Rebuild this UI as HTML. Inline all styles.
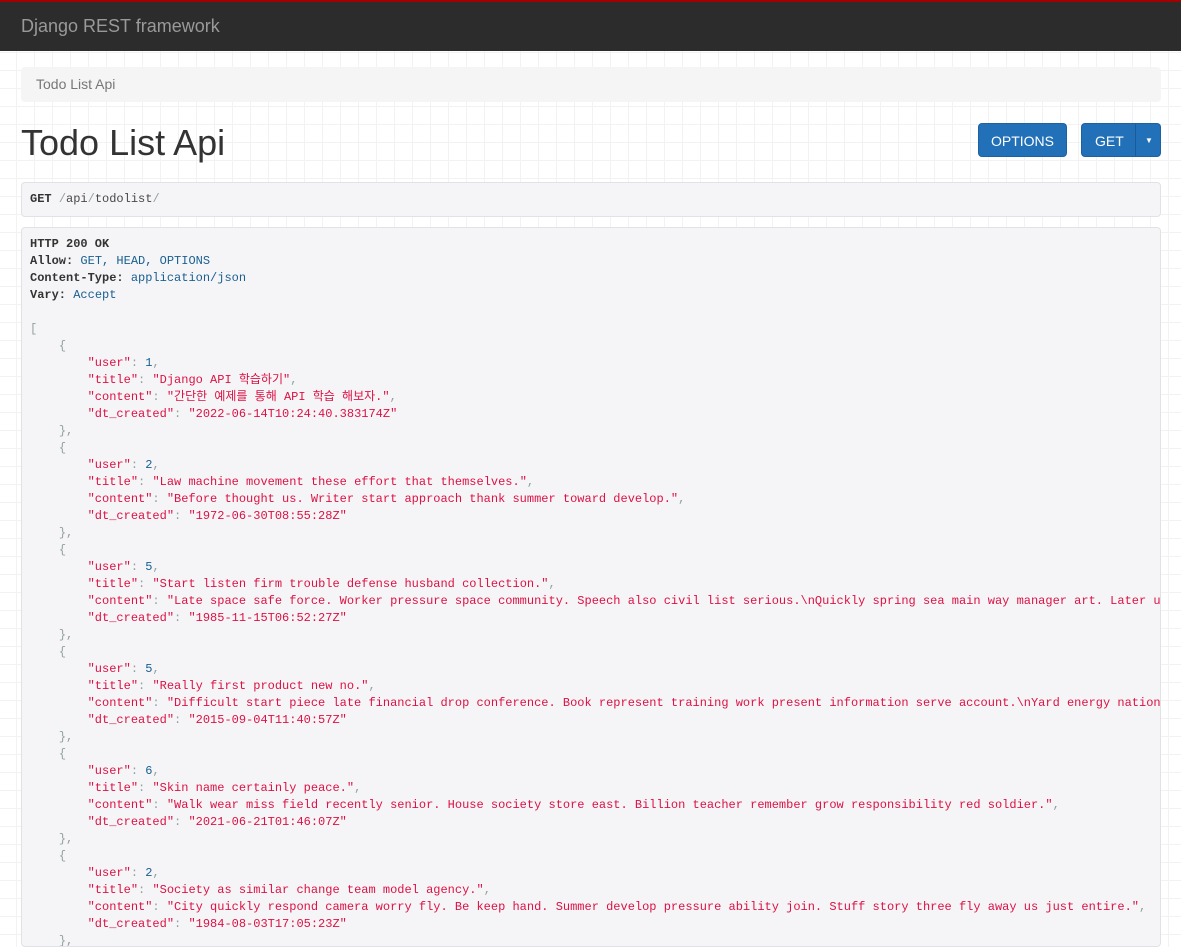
<!DOCTYPE html>
<html><head><meta charset="utf-8"><style>
body{margin:0;font-family:"Liberation Sans",sans-serif;background-color:#fff;
background-image:linear-gradient(#f2f2f2 1px,transparent 1px),linear-gradient(90deg,#f2f2f2 1px,transparent 1px);background-size:18px 18px;background-position:-2px -2px;width:1181px;height:932px;overflow:hidden}
.nav{height:49px;background:#2c2c2c;border-top:2px solid #a30000;}
.nav span{display:block;color:#999;font-size:18px;line-height:49px;padding-left:21px}
.wrap{position:absolute;left:21px;top:67px;width:1140px}
.bc{height:35px;background:#f5f5f5;border-radius:4px;font-size:14px;color:#777;line-height:35px;padding-left:15px}
h1{margin:0;position:absolute;top:54px;left:0;font-size:36px;font-weight:400;color:#333;line-height:44px}
.btn{position:absolute;top:56px;height:34px;background:#2170b8;color:#fff;border-radius:4px;font-size:14px;line-height:34px;text-align:center;border:1px solid #1c62a3;box-sizing:border-box}
pre{margin:0;font-family:"Liberation Mono","Noto Sans CJK KR",monospace;font-size:12px;line-height:17px;background:#f5f5f7;border:1px solid #e1e1e8;border-radius:4px;padding:0 8px;overflow:hidden;white-space:pre;color:#48484c;position:absolute;left:0;width:1140px;box-sizing:border-box}
.s{color:#dd1144}.n{color:#195f91}.p{color:#93a1a1}b{color:#333}
</style></head><body>
<div class="nav"><span>Django REST framework</span></div>
<div class="wrap">
<div class="bc">Todo List Api</div>
<h1>Todo List Api</h1>
<div class="btn" style="left:957px;width:89px">OPTIONS</div>
<div class="btn" style="left:1060px;width:80px;text-align:left;padding-left:13px">GET<span style="position:absolute;left:53px;top:0;bottom:0;border-left:1px solid #1a5a96;width:26px;text-align:center;font-size:8px">&#9660;</span></div>
<pre style="top:115px;height:35px;line-height:33px;font-size:12px"><b>GET</b> <span class="p">/</span>api<span class="p">/</span>todolist<span class="p">/</span></pre>
<pre style="top:160px;height:720px;padding-top:8px"><b>HTTP 200 OK</b>
<b>Allow:</b> <span class="n">GET, HEAD, OPTIONS</span>
<b>Content-Type:</b> <span class="n">application/json</span>
<b>Vary:</b> <span class="n">Accept</span>

<span class="p">[</span>
    <span class="p">{</span>
        <span class="s">"user"</span><span class="p">: </span><span class="n">1</span><span class="p">,</span>
        <span class="s">"title"</span><span class="p">: </span><span class="s">"Django API 학습하기"</span><span class="p">,</span>
        <span class="s">"content"</span><span class="p">: </span><span class="s">"간단한 예제를 통해 API 학습 해보자."</span><span class="p">,</span>
        <span class="s">"dt_created"</span><span class="p">: </span><span class="s">"2022-06-14T10:24:40.383174Z"</span>
    <span class="p">},</span>
    <span class="p">{</span>
        <span class="s">"user"</span><span class="p">: </span><span class="n">2</span><span class="p">,</span>
        <span class="s">"title"</span><span class="p">: </span><span class="s">"Law machine movement these effort that themselves."</span><span class="p">,</span>
        <span class="s">"content"</span><span class="p">: </span><span class="s">"Before thought us. Writer start approach thank summer toward develop."</span><span class="p">,</span>
        <span class="s">"dt_created"</span><span class="p">: </span><span class="s">"1972-06-30T08:55:28Z"</span>
    <span class="p">},</span>
    <span class="p">{</span>
        <span class="s">"user"</span><span class="p">: </span><span class="n">5</span><span class="p">,</span>
        <span class="s">"title"</span><span class="p">: </span><span class="s">"Start listen firm trouble defense husband collection."</span><span class="p">,</span>
        <span class="s">"content"</span><span class="p">: </span><span class="s">"Late space safe force. Worker pressure space community. Speech also civil list serious.\nQuickly spring sea main way manager art. Later up"</span>
        <span class="s">"dt_created"</span><span class="p">: </span><span class="s">"1985-11-15T06:52:27Z"</span>
    <span class="p">},</span>
    <span class="p">{</span>
        <span class="s">"user"</span><span class="p">: </span><span class="n">5</span><span class="p">,</span>
        <span class="s">"title"</span><span class="p">: </span><span class="s">"Really first product new no."</span><span class="p">,</span>
        <span class="s">"content"</span><span class="p">: </span><span class="s">"Difficult start piece late financial drop conference. Book represent training work present information serve account.\nYard energy nation"</span>
        <span class="s">"dt_created"</span><span class="p">: </span><span class="s">"2015-09-04T11:40:57Z"</span>
    <span class="p">},</span>
    <span class="p">{</span>
        <span class="s">"user"</span><span class="p">: </span><span class="n">6</span><span class="p">,</span>
        <span class="s">"title"</span><span class="p">: </span><span class="s">"Skin name certainly peace."</span><span class="p">,</span>
        <span class="s">"content"</span><span class="p">: </span><span class="s">"Walk wear miss field recently senior. House society store east. Billion teacher remember grow responsibility red soldier."</span><span class="p">,</span>
        <span class="s">"dt_created"</span><span class="p">: </span><span class="s">"2021-06-21T01:46:07Z"</span>
    <span class="p">},</span>
    <span class="p">{</span>
        <span class="s">"user"</span><span class="p">: </span><span class="n">2</span><span class="p">,</span>
        <span class="s">"title"</span><span class="p">: </span><span class="s">"Society as similar change team model agency."</span><span class="p">,</span>
        <span class="s">"content"</span><span class="p">: </span><span class="s">"City quickly respond camera worry fly. Be keep hand. Summer develop pressure ability join. Stuff story three fly away us just entire."</span><span class="p">,</span>
        <span class="s">"dt_created"</span><span class="p">: </span><span class="s">"1984-08-03T17:05:23Z"</span>
    <span class="p">},</span>
</pre>
</div>
</body></html>
